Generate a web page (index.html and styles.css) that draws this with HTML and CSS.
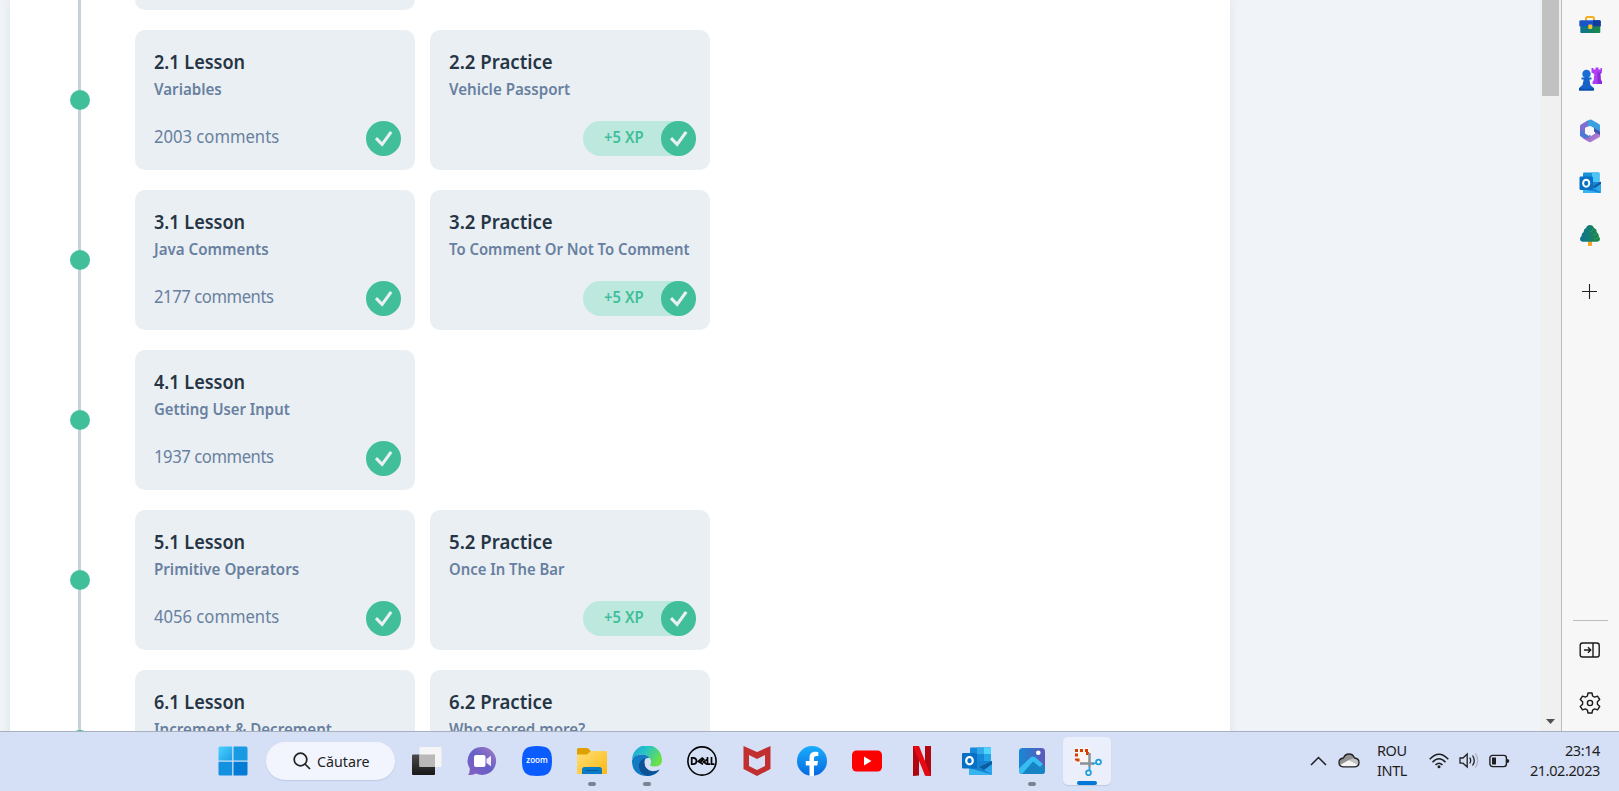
FILE: index.html
```html
<!DOCTYPE html>
<html lang="ro">
<head>
<meta charset="utf-8">
<title>Lessons</title>
<link rel="stylesheet" href="styles.css">
</head>
<body>
<svg class="defs" aria-hidden="true">
  <defs>
    <symbol id="check" viewBox="0 0 35 35"><circle cx="17.5" cy="17.5" r="17.5" fill="#40bf9a"/><path d="M10 17.2l6.100 6.100L25.200 10.800" fill="none" stroke="#ebf0f4" stroke-width="3.100"/></symbol>
    <linearGradient id="blue" x1="0" y1="0" x2="1" y2="1"><stop offset="0" stop-color="#4cd2ff"/><stop offset="1" stop-color="#1d9ee6"/></linearGradient>
    <linearGradient id="chat" x1="0" y1="1" x2="1" y2="0"><stop offset="0" stop-color="#8a5fc0"/><stop offset=".5" stop-color="#6360c6"/><stop offset="1" stop-color="#a97cc4"/></linearGradient>
    <linearGradient id="folder" x1="0" y1="0" x2="1" y2="1"><stop offset="0" stop-color="#ffe07a"/><stop offset="1" stop-color="#fdb80e"/></linearGradient>
    <linearGradient id="edgeTop" x1="0" y1="0" x2="1" y2=".5"><stop offset="0" stop-color="#1c9fe0"/><stop offset=".45" stop-color="#26c3c8"/><stop offset="1" stop-color="#6be04a"/></linearGradient>
    <linearGradient id="fb" x1="0" y1="0" x2="0" y2="1"><stop offset="0" stop-color="#1aaefc"/><stop offset="1" stop-color="#0668e1"/></linearGradient>
    <linearGradient id="photo" x1="0" y1="0" x2="1" y2="0"><stop offset="0" stop-color="#1489d6"/><stop offset="1" stop-color="#6056b8"/></linearGradient>
    <linearGradient id="green" x1="0" y1="0" x2="1" y2="0"><stop offset="0" stop-color="#0d7296"/><stop offset="1" stop-color="#1c8a44"/></linearGradient>
    <linearGradient id="purple" x1="0" y1="0" x2="1" y2="1"><stop offset="0" stop-color="#5b4bc0"/><stop offset="1" stop-color="#cf8fda"/></linearGradient>
    <linearGradient id="dark" x1="0" y1="0" x2="0" y2="1"><stop offset="0" stop-color="#4a4a4a"/><stop offset="1" stop-color="#181818"/></linearGradient>
    <symbol id="outlook" viewBox="0 0 30 30">
      <path d="M9 1.500h19a1 1 0 0 1 1 1V15H8V2.500a1 1 0 0 1 1-1z" fill="#1789da"/><path d="M15 1.500h13.500V8H15z" fill="#32a9e8"/><path d="M22 1.500h6a1 1 0 0 1 1 1V8h-7z" fill="#50d5ff"/><path d="M8 8h7v7H8z" fill="#0f5fb0"/><path d="M22 8h7v7h-7z" fill="#23a7e8"/>
      <path d="M7 15h23v13a1 1 0 0 1-1 1H8a1 1 0 0 1-1-1z" fill="#1682d4"/><path d="M30 15v13.500L17 21z" fill="#2aa4ea"/><path d="M17 21l13-6v3l-8 6z" fill="#0d5a9e"/><path d="M7 22l23 6.500-1 .5H8a1 1 0 0 1-1-1z" fill="#36b4f0"/>
      <rect y="7" width="15" height="15.500" rx="1.300" fill="#0670c4"/><ellipse cx="7.500" cy="14.700" rx="3.300" ry="3.700" fill="none" stroke="#fff" stroke-width="2.200"/>
    </symbol>
    <symbol id="outlook-small" viewBox="0 0 22 22">
      <path d="M5 .5h14.500a1 1 0 0 1 1 1V11H4V1.500a1 1 0 0 1 1-1z" fill="#1b90dd"/><path d="M13 .5h6.500a1 1 0 0 1 1 1V10H13z" fill="#4cc4f6"/><path d="M4 10h18v10a1 1 0 0 1-1 1H5a1 1 0 0 1-1-1z" fill="#1a86d8"/><path d="M22 10v10.500L13 15z" fill="#2fa8ec"/><path d="M13 15l9-5.500v2.200L16 16z" fill="#0d5a9e"/><path d="M4 17l17 4H5a1 1 0 0 1-1-1z" fill="#36b4f0"/>
      <rect x=".5" y="4.500" width="13.500" height="13.500" rx="1.200" fill="#0670c4"/><ellipse cx="7.200" cy="11.200" rx="3.100" ry="3.500" fill="none" stroke="#fff" stroke-width="2"/>
    </symbol>
  </defs>
</svg>

<div class="screen">
  <div class="browser">
    <div class="page">
      <main class="panel">
        <section class="row first"><div class="rail"></div><div class="card"></div></section>
        <section class="row"><div class="rail"><i class="dot"></i></div>
          <article class="card"><h3>2.1 Lesson</h3><h4>Variables</h4><footer><span class="comments">2003 comments</span><svg class="done"><use href="#check"/></svg></footer></article>
          <article class="card practice"><h3>2.2 Practice</h3><h4>Vehicle Passport</h4><footer><span class="xp"><b>+5 XP</b><svg class="done"><use href="#check"/></svg></span></footer></article>
        </section>
        <section class="row"><div class="rail"><i class="dot"></i></div>
          <article class="card"><h3>3.1 Lesson</h3><h4>Java Comments</h4><footer><span class="comments tight">2177 comments</span><svg class="done"><use href="#check"/></svg></footer></article>
          <article class="card practice"><h3>3.2 Practice</h3><h4 class="long">To Comment Or Not To Comment</h4><footer><span class="xp"><b>+5 XP</b><svg class="done"><use href="#check"/></svg></span></footer></article>
        </section>
        <section class="row"><div class="rail"><i class="dot"></i></div>
          <article class="card"><h3>4.1 Lesson</h3><h4 class="long">Getting User Input</h4><footer><span class="comments tight">1937 comments</span><svg class="done"><use href="#check"/></svg></footer></article>
        </section>
        <section class="row"><div class="rail"><i class="dot"></i></div>
          <article class="card"><h3>5.1 Lesson</h3><h4>Primitive Operators</h4><footer><span class="comments">4056 comments</span><svg class="done"><use href="#check"/></svg></footer></article>
          <article class="card practice"><h3>5.2 Practice</h3><h4 class="long">Once In The Bar</h4><footer><span class="xp"><b>+5 XP</b><svg class="done"><use href="#check"/></svg></span></footer></article>
        </section>
        <section class="row"><div class="rail"><i class="dot"></i></div>
          <article class="card"><h3>6.1 Lesson</h3><h4>Increment &amp; Decrement</h4></article>
          <article class="card practice"><h3>6.2 Practice</h3><h4>Who scored more?</h4></article>
        </section>
      </main>
    </div>
    <div class="scrollbar"><div class="thumb"></div><svg width="9" height="5" viewBox="0 0 9 5"><path d="M0 0h9L4.500 5z" fill="#505050"/></svg></div>
    <aside class="sidebar">
      <div class="tool"><svg width="22" height="22" viewBox="0 0 22 22"><path d="M7 6V3.500Q7 2 8.500 2h5Q15 2 15 3.500V6" fill="none" stroke="#f6ae20" stroke-width="2"/><rect x="1.300" y="8" width="20" height="10" rx="1" fill="url(#green)"/><path d="M2 5.300h18.500q1 0 1.200 1v5H.300v-5q.2-1 1.700-1z" fill="#1a55c8"/><path d="M14 5.300h6.500q1 0 1.200 1v5H14z" fill="#143c9c"/><rect x="9.300" y="9.500" width="4" height="4.500" rx="1" fill="#ffc32a"/></svg></div>
      <div class="tool"><svg width="24" height="24" viewBox="0 0 24 24"><path d="M13.500 1h2v1.500h2V.500h3v2h2V1h1.500v4.500l-1.700 1.500.5 6 1.700 2v2h-10v-2l1.300-2 .5-6-2.800-1.500z" fill="#b03cf6"/><path d="M19.500 5.500h4L22.300 7l.5 6 1.700 2v2h-5z" fill="#8a2bd8"/><circle cx="8.500" cy="7" r="4.200" fill="#1a6cd6"/><path d="M3.500 10.500h10v2h-2l.8 5.500 3.500 3v2.500H1V21l3.500-3 1.200-5.500H3.500z" fill="#1663c8"/><path d="M1 21q7 2 14.800 0v2.500H1z" fill="#0a4cab"/></svg></div>
      <div class="tool"><svg width="22" height="24" viewBox="0 0 22 24"><path d="M7 2.500L10.500.700q1-.5 2 0L20 5q1 .6 1 2v9l-6-3.500V9l-3.500-2L7 8z" fill="#3c9fe0"/><path d="M7 2.500L2 5.500Q1 6 1 7.500V17l5-2.500V9l3-2V1.500z" fill="#7e6ed0"/><path d="M1 17V10l5 4.500 4 2.500v-2.500l2 1-2 5-6-1.800z" fill="#4d79d3"/><path d="M21 12v5q0 1-1 1.600L12 23q-1 .5-2 0l-8-4.800q5 1.800 8 0l6-3.500V11z" fill="url(#purple)"/><path d="M15 9l6 3.500V16l-6-3.500z" fill="#4354b6"/><path d="M11 7.500l3.900 2.200v4.600L11 16.500l-3.900-2.200V9.700z" fill="#f7f7f7"/></svg></div>
      <div class="tool"><svg width="22" height="22"><use href="#outlook-small"/></svg></div>
      <div class="tool"><svg width="22" height="24" viewBox="0 0 22 24"><rect x="9" y="16" width="4" height="6" rx="1" fill="#f6a51d"/><path d="M11 1q3 0 4 3 3 1 2.600 4 2.700 2 2.300 4.500 1.500 1.500 1 3.500-.7 1.700-3 1.700H4.200Q1 17.500 1 15q0-2 1.600-3-.3-2.500 2-4Q4.500 5 7 4q1-3 4-3z" fill="url(#green)"/><path d="M14 5q-1 3-3 3m7 1q-1 2-4 2m6 2q-2 2-5 2" stroke="#3aa668" fill="none" opacity=".7"/></svg></div>
      <div class="tool add"><svg width="15" height="15" viewBox="0 0 15 15"><path d="M7.500 0v15M0 7.500h15" stroke="#222" stroke-width="1.100"/></svg></div>
      <hr>
      <div class="tool"><svg width="22" height="18" viewBox="0 0 22 18" fill="none" stroke="#1b1b1b" stroke-width="1.400"><rect x="1.200" y="2" width="19" height="14" rx="2.300"/><path d="M14 2v14M5 9h6.500M9 6.300L11.700 9 9 11.700"/></svg></div>
      <div class="tool"><svg width="22" height="22" viewBox="0 0 22 22" fill="none" stroke="#1b1b1b" stroke-width="1.400" stroke-linejoin="round"><path d="M9 1h4l.6 3 2 1.100 2.900-1L20.700 7.500 18.400 9.700v2.600l2.300 2.200-2.200 3.400-2.900-1-2 1.200-.6 2.900H9l-.6-2.900-2-1.200-2.900 1-2.200-3.400 2.300-2.200V9.700L1.300 7.500l2.200-3.400 2.900 1 2-1.100z"/><circle cx="11" cy="11" r="2.600"/></svg></div>
    </aside>
  </div>

  <div class="taskbar">
    <nav class="apps">
      <div class="app"><svg viewBox="0 0 30 30"><path d="M2 .5h12.200v14H.5V2A1.500 1.500 0 0 1 2 .5z" fill="url(#blue)"/><path d="M15.500.500H28A1.500 1.500 0 0 1 29.500 2v12.500h-14z" fill="#199be3"/><path d="M.5 15.800h13.700v13.700H2A1.500 1.500 0 0 1 .5 28z" fill="#1390df"/><path d="M15.500 15.800h14V28a1.500 1.500 0 0 1-1.500 1.500H15.500z" fill="#047bd5"/></svg></div>
      <div class="search"><svg width="18" height="18" viewBox="0 0 18 18" fill="none" stroke="#222" stroke-width="1.700"><circle cx="7.500" cy="7.500" r="6.300"/><path d="M12 12l5 5"/></svg><span>Căutare</span></div>
      <div class="app"><svg viewBox="0 0 30 30"><rect x="0" y="8.500" width="23" height="20.500" rx="1" fill="url(#dark)"/><rect x="7.500" y="1" width="22" height="20" rx="1" fill="#f5f5f5"/><path d="M7.500 8.500H23V21H8.500a1 1 0 0 1-1-1z" fill="#b9b9b9"/></svg></div>
      <div class="app"><svg viewBox="0 0 30 30"><path d="M15 1a14 14 0 1 1-6 26.600Q5 29.500 1 29q2-2 1.800-6.500A14 14 0 0 1 15 1z" fill="url(#chat)"/><rect x="7" y="9" width="11.500" height="12" rx="2" fill="#fff"/><path d="M19.500 13l4.500-3.300v10.600L19.500 17z" fill="#f5eaff"/></svg></div>
      <div class="app"><svg viewBox="0 0 30 30"><path d="M15 0C26 0 30 3 30 15S26 30 15 30 0 27 0 15 4 0 15 0z" fill="#0b5cff"/><text x="15" y="17" text-anchor="middle" textLength="21.500" lengthAdjust="spacingAndGlyphs" class="zoom">zoom</text></svg></div>
      <div class="app running"><svg viewBox="0 0 30 30"><path d="M0 12V3.500Q0 2 1.500 2H10q1 0 1.600.8L14 5.500V12z" fill="#dfa000"/><path d="M0 8.500h10L14 5h15q1 0 1 1v21q0 1-1 1H1q-1 0-1-1z" fill="url(#folder)"/><path d="M5 28v-4.500Q5 21 7.500 21h15q2.500 0 2.500 2.500V28z" fill="#0a7bc5"/><path d="M8.500 24.500h13" stroke="#075a95"/></svg></div>
      <div class="app running"><svg viewBox="0 0 30 30"><path d="M0 14A15 15 0 0 1 30 14q0 6.500-7.500 6.500-3.500 0-4.800-1.600 1.700-1 1.300-3.900C18 11 14 8.500 10 8.500 5 8.500 1 11 0 14z" fill="url(#edgeTop)"/><path d="M0 14.500Q1.500 8.500 10 8.500q5 0 7.500 3.500-4-.5-5 2-2 5.500 1 9.500 5 4.500 14 .5-4.500 6-12.500 6Q0 29.500 0 14.500z" fill="#127bc4"/><path d="M13 12q-7 3-6 9.500 1.500 7 8.500 8.400 8-.4 12.200-6.400-3 1.800-7.200 1.800-8-1.300-8-9 .1-2.500.5-4.300z" fill="#0c5294"/></svg></div>
      <div class="app"><svg viewBox="0 0 30 30"><circle cx="15" cy="15" r="14.100" fill="none" stroke="#050505" stroke-width="1.600"/><g fill="none" stroke="#050505" stroke-width="1.700"><path d="M4.700 11.800v6.400h1.500q3.300-.2 3.300-3.200t-3.300-3.200zM20.500 11v7.200h2.700M24.500 11v7.200h3"/><path d="M16 18.300l-4.800-3 4-3.300 1.500 1.200-3.600 3M20 18.300l-3.500-2.300 4-2.800"/></g></svg></div>
      <div class="app"><svg viewBox="0 0 30 30"><path d="M1.500 0L15 6 28.500 0v23L15 30 1.500 23zM7 9v11l8 4 8-4V9l-8 4z" fill="#c1302e" fill-rule="evenodd"/></svg></div>
      <div class="app"><svg viewBox="0 0 30 30"><circle cx="15" cy="15" r="15" fill="url(#fb)"/><path d="M12.500 30V19.500H8.800V15h3.700v-3.200c0-4 2.300-6 5.800-6q1.500 0 3 .3V10h-1.800c-2 0-2.500 1-2.500 2.300V15h4l-.7 4.500H17V30z" fill="#fff"/></svg></div>
      <div class="app"><svg viewBox="0 0 30 30"><rect y="4.500" width="30" height="21" rx="4.500" fill="#f00"/><path d="M12 10.500v9l7.500-4.500z" fill="#fff"/></svg></div>
      <div class="app"><svg viewBox="0 0 30 30"><path d="M6 0h6v29.400L6 30z" fill="#b1060f"/><path d="M18 0h6v30l-6-.6z" fill="#b1060f"/><path d="M6 0h6l12 30-6-.6z" fill="#e50914"/></svg></div>
      <div class="app"><svg viewBox="0 0 30 30"><use href="#outlook"/></svg></div>
      <div class="app running"><svg viewBox="0 0 30 30"><rect x="2" y="2" width="26" height="26" rx="3.500" fill="url(#photo)"/><circle cx="21.300" cy="6.700" r="2.300" fill="#fff"/><path d="M3 24L14 12q2-2 4 0l10 9v3.500q0 3.500-3.500 3.500h-19Q2 28 3 24z" fill="#1784c6"/><path d="M2 22.500L13.500 11.500q2.500-2 5 0L26 18l-3 3-7-5.500L5 28Q2 27.500 2 24.500z" fill="#36bdf1"/></svg></div>
      <div class="app active"><svg viewBox="0 0 30 30"><path d="M4 2h14v15H4z" fill="#faf5f1"/><path d="M3 4.500h14M4.500 7.500v7M15.500 6v4M4.500 14h4" fill="none" stroke="#d83b01" stroke-width="3" stroke-dasharray="3 2"/><path d="M17.500 7v14M8 17.500h14" stroke="#8b9297" stroke-width="2.500"/><g fill="#fff" stroke="#1e9de0" stroke-width="1.800"><circle cx="26.500" cy="16" r="2.400"/><circle cx="16.500" cy="26.800" r="2.400"/><path d="M20 18l4-1M17.500 21v3" fill="none"/></g></svg></div>
    </nav>
    <div class="tray">
      <svg class="up" width="17" height="10" viewBox="0 0 17 10"><path d="M1 9l7.500-7.500L16 9" fill="none" stroke="#202020" stroke-width="1.500"/></svg>
      <svg class="cloud" width="22" height="15" viewBox="0 0 22 15"><path d="M5 13.800Q1 13.500 1 9.500T5.500 5Q7 1 11 1t5.500 4q4.500.5 4.500 4.500t-4 4.300z" fill="#929292"/><path d="M2 12l9-5 9.500 5q-1.500 1.800-3.500 1.800H5Q3 13.800 2 12z" fill="#f4f4f4"/><path d="M11 7l5-2q4.500.5 4.500 4.500v2.500z" fill="#c5c5c5"/><path d="M5 13.800Q1 13.500 1 9.500T5.500 5Q7 1 11 1t5.500 4q4.500.5 4.500 4.500t-4 4.300z" fill="none" stroke="#222" stroke-width="1.300"/></svg>
      <div class="lang">ROU<br>INTL</div>
      <svg class="wifi" width="20" height="16" viewBox="0 0 20 16" fill="none" stroke="#202020" stroke-width="1.500"><path d="M.7 6.300q9.300-10 18.600 0M3.500 9.200q6.500-7 13 0M6.500 12q3.500-3.700 7 0"/><circle cx="10" cy="13.700" r="1.500" fill="#202020" stroke="none"/></svg>
      <svg class="sound" width="20" height="17" viewBox="0 0 20 17" fill="none" stroke="#202020" stroke-width="1.300"><path d="M1 6h3l4.200-4v13L4 11.200H1zM10.700 5.700q2 2.800 0 5.600M13.500 3.500q3.500 5 0 10"/><path d="M16.200 1.500q5 7 0 14" stroke="#aeb6ca"/></svg>
      <svg class="battery" width="21" height="14" viewBox="0 0 21 14"><rect x=".9" y="1.400" width="16.500" height="11.200" rx="2.500" fill="none" stroke="#202020" stroke-width="1.400"/><path d="M3 3.500h4v7H3zM18 5q2.300 0 2.300 2T18 9z" fill="#202020"/></svg>
      <div class="clock">23:14<br>21.02.2023</div>
    </div>
  </div>
</div>
</body>
</html>
```
FILE: styles.css
```css
* { box-sizing: border-box; }
body { margin: 0; font-family: "Noto Sans", sans-serif; overflow: hidden; }
svg { display: block; flex: none; }
.defs { position: absolute; width: 0; height: 0; }
.screen { width: 1619px; height: 791px; display: flex; flex-direction: column; overflow: hidden; }
.browser { height: 731px; display: flex; overflow: hidden; }

.page { width: 1540px; padding-left: 10px; background: #f0f4f8; overflow: hidden; }
.panel { width: 1220px; height: 900px; background: #fff; box-shadow: 0 0 10px rgba(60, 80, 100, .1); }
.row { display: flex; height: 160px; padding-left: 125px; background: linear-gradient(#c6d1dc, #c6d1dc) 68px 0 / 3px 100% no-repeat; }
.row.first { height: 30px; overflow: hidden; }
.row.first .card { height: 140px; margin-top: -130px; }
.rail { width: 0; }
.dot { display: block; width: 20px; height: 20px; margin: 60px 0 0 -65px; border-radius: 50%; background: #40bf9a; }
.card { width: 280px; height: 140px; margin-right: 15px; padding: 19px 14px 14px 19px; border-radius: 10px; background: #eaeff3; display: flex; flex-direction: column; }
.card h3, .card h4, .comments { margin: 0; white-space: nowrap; transform-origin: 0 50%; }
.card h3 { font-size: 19.500px; font-weight: 600; line-height: 26px; color: #263545; transform: scaleX(.925); }
.card.practice h3 { transform: scaleX(.955); }
.card h4 { font-size: 16px; font-weight: 600; line-height: 28px; color: #6880a0; transform: scaleX(.945); }
.card h4.long { transform: scaleX(.929); }
.card footer { margin-top: auto; display: flex; justify-content: flex-end; align-items: center; height: 35px; }
.comments { flex: 1; font-size: 17.500px; line-height: 35px; color: #6880a0; transform: translateY(-2px) scaleX(.95); }
.comments.tight { letter-spacing: -.45px; }
.done { width: 35px; height: 35px; }
.xp { width: 113px; height: 35px; border-radius: 18px; background: #bce8de; display: flex; justify-content: flex-end; align-items: center; }
.xp b { width: 57px; font-size: 15.500px; font-weight: 600; line-height: 35px; color: #40bf9a; white-space: nowrap; transform: translateY(-1px) scaleX(.96); transform-origin: 0 50%; }

.scrollbar { width: 21px; padding: 0 2px 7px; background: #f0f0f0; display: flex; flex-direction: column; align-items: center; justify-content: space-between; }
.thumb { width: 17px; height: 96px; background: #c1c1c1; }
.sidebar { width: 58px; padding: 0 2px 2px 0; border-left: 1px solid #bcbcbc; background: #f7f7f7; display: flex; flex-direction: column; align-items: center; }
.tool { height: 52.400px; display: flex; align-items: center; justify-content: center; }
.tool.add { height: 60px; }
.sidebar hr { width: 35px; height: 1px; margin: auto -1px 3px 0; border: 0; background: #bdbdbd; }

.taskbar { height: 60px; padding-bottom: 2px; border-top: 1px solid #a9b0bf; background: #d5dff6; display: flex; justify-content: space-between; }
.apps { margin-left: 205px; display: flex; align-items: center; }
.app { position: relative; width: 55px; height: 48px; display: flex; align-items: center; justify-content: center; }
.app svg { width: 30px; height: 30px; }
.search { width: 129px; height: 38px; margin: 0 4.500px 0 6px; border-radius: 19px; background: #f2f5fd; box-shadow: 0 1px 1px #bccbe3; display: flex; align-items: center; padding-left: 27px; gap: 6px; font-size: 15px; color: #1e1e1e; }
.search span { transform: scaleX(.95); transform-origin: 0 50%; }
.zoom { font: 600 8px "Open Sans", sans-serif; fill: #fff; }
.running::after, .active::after { content: ""; position: absolute; bottom: -1px; width: 8px; height: 4px; border-radius: 2px; background: #7c8290; }
.active { width: 48px; margin-left: 3px; border-radius: 5px; background: #eaeffb; box-shadow: 0 1px 1px #bdc7dd; }
.active::after { bottom: 0; width: 20px; background: #0078d4; }
.tray { width: 330px; padding-right: 19px; display: flex; align-items: center; font-size: 14.500px; line-height: 20px; color: #1e1e1e; letter-spacing: -.4px; }
.cloud { margin-left: 11px; }
.up { margin-left: 21px; }
.lang { margin: -2px 0 0 17px; width: 52px; }
.sound { margin-left: 10px; }
.battery { margin-left: 10px; }
.clock { margin: -2px 0 0 auto; text-align: right; }
```
